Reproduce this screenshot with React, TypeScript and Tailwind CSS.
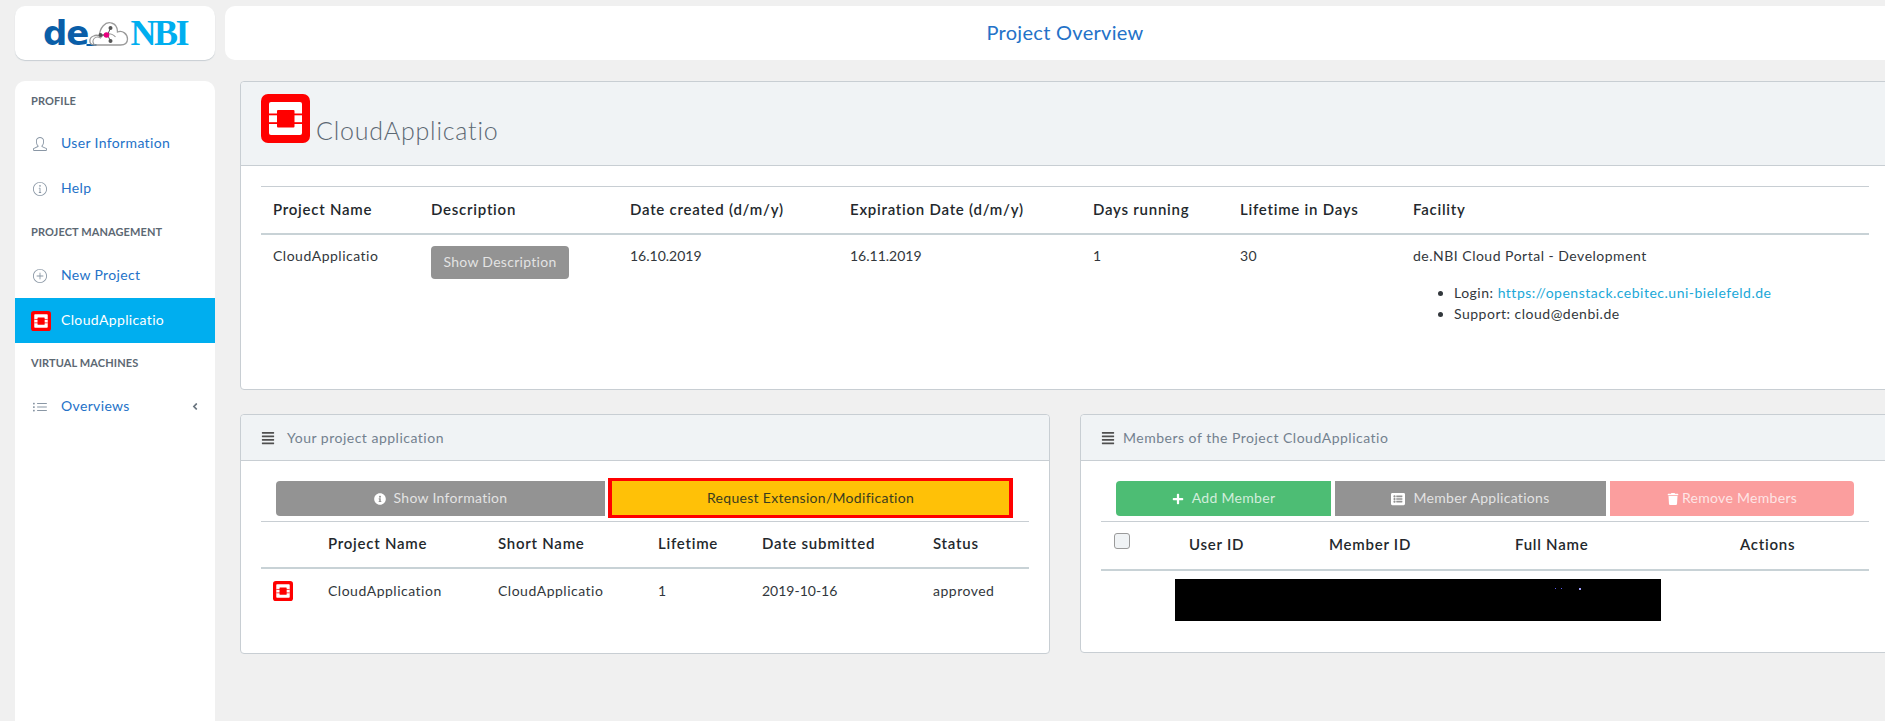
import React from 'react';
import { SlUser, SlInfo, SlPlus, SlList } from 'react-icons/sl';
import { FaAlignJustify, FaInfoCircle, FaPlus, FaListAlt, FaTrash, FaAngleLeft } from 'react-icons/fa';

const font = "font-['Lato','Open_Sans',sans-serif]";

function StackIcon({ className }: { className?: string }) {
    return (
        <svg viewBox="0 0 49 49" className={className}>
            <rect width="49" height="49" rx="7" fill="#ff0000" />
            <rect x="8" y="8" width="33" height="33" rx="2" fill="#ffffff" />
            <rect x="8" y="19.5" width="33" height="1.8" fill="#ff0000" />
            <rect x="8" y="28.2" width="33" height="1.8" fill="#ff0000" />
            <rect x="16" y="16" width="17.5" height="17.5" rx="1" fill="#ff0000" />
        </svg>
    );
}

function Logo() {
    return (
        <div className="flex h-[54px] w-[200px] shrink-0 items-center justify-center rounded-[10px] bg-white shadow-[0_1px_1px_#c8ced3]">
            <div className="flex items-center">
                <span className="font-['DejaVu_Sans',sans-serif] text-[34px] leading-none font-bold tracking-[-1px] text-[#0a5ea8]">de</span>
                <svg viewBox="0 0 42 28" className="-ml-[3px] h-[28px] w-[45px]">
                    <path d="M0 26 L10 26" fill="none" stroke="#0a5ea8" strokeWidth="2" />
                    <path d="M8 26 C2 26 2 19 7 17 C9 16 11 16 13 17 C13 9 19 2 25 4 C29 5 31 9 31 13 C36 11 41 15 41 20 C41 24 38 26 34 26 Z" fill="none" stroke="#9a9a9a" strokeWidth="1.3" />
                    <path d="M8 26 C4 21 9 16 14 19 C17 14 25 13 29 18" fill="none" stroke="#9a9a9a" strokeWidth="1.1" />
                    <path d="M13 16 L21 16 L24 9 M21 16 L24 22" stroke="#555555" strokeWidth="1" fill="none" />
                    <circle cx="24" cy="9" r="2" fill="#555555" />
                    <circle cx="14" cy="16" r="2" fill="#555555" />
                    <circle cx="24" cy="22" r="2" fill="#555555" />
                    <circle cx="20" cy="16" r="2.8" fill="#e6007e" />
                </svg>
                <span className="font-['Liberation_Serif',serif] text-[36px] leading-none font-bold tracking-[-2.5px] text-[#00aeef]">NBI</span>
            </div>
        </div>
    );
}

function NavTitle({ children, h }: { children: React.ReactNode; h: string }) {
    return (
        <div className={`flex items-center px-4 text-[11px] font-bold tracking-[0.1px] text-[#5c6873] ${h}`}>
            {children}
        </div>
    );
}

function NavItem({ icon, label, active, end }: { icon: React.ReactNode; label: string; active?: boolean; end?: React.ReactNode }) {
    return (
        <a className={`flex h-[45px] items-center pr-4 pl-4 text-[14px] tracking-[0.35px] ${active ? 'bg-[#00aeef] text-white' : 'text-[#2472c8]'}`}>
            <span className="flex w-[30px] shrink-0 items-center text-[#8a97a5]">{icon}</span>
            <span className="flex-1 pb-[2px]">{label}</span>
            {end}
        </a>
    );
}

function Sidebar() {
    return (
        <aside className="w-[200px] shrink-0 self-stretch rounded-t-[10px] bg-white">
            <NavTitle h="h-[40px]">PROFILE</NavTitle>
            <NavItem icon={<SlUser className="ml-[2px] h-[14px] w-[14px]" />} label="User Information" />
            <NavItem icon={<SlInfo className="ml-[2px] h-[14px] w-[14px]" />} label="Help" />
            <NavTitle h="h-[42px]">PROJECT MANAGEMENT</NavTitle>
            <NavItem icon={<SlPlus className="ml-[2px] h-[14px] w-[14px]" />} label="New Project" />
            <NavItem icon={<StackIcon className="h-5 w-5" />} label="CloudApplicatio" active />
            <NavTitle h="h-[41px]">VIRTUAL MACHINES</NavTitle>
            <NavItem
                icon={<SlList className="ml-[2px] h-[14px] w-[14px]" />}
                label="Overviews"
                end={<FaAngleLeft className="h-[11px] w-[8px] text-[#6b7680]" />}
            />
        </aside>
    );
}

function Card({ className, header, bodyClass, children }: { className?: string; header: React.ReactNode; bodyClass?: string; children: React.ReactNode }) {
    return (
        <section className={`rounded-[4px] border border-[#c8ced3] bg-white ${className ?? ''}`}>
            {header}
            <div className={bodyClass}>{children}</div>
        </section>
    );
}

function SmallHeader({ title, gap }: { title: string; gap: string }) {
    return (
        <div className="flex h-[46px] items-center rounded-t-[4px] border-b border-[#c8ced3] bg-[#f0f3f5] pl-5 text-[14px] text-[#73818f]">
            <FaAlignJustify className={`h-[14px] w-[14px] text-[#4f4f4f] ${gap}`} />
            <span className="pb-[1px] tracking-[0.5px]">{title}</span>
        </div>
    );
}

const th = 'border-t border-b-2 border-t-[#c8ced3] border-b-[#c8d2d6] px-3 pb-[2px] text-left align-middle text-[15px] font-semibold text-[#23282c] tracking-[0.75px]';

function ProjectTable() {
    const headers = [
        ['Project Name', 'w-[158px]'],
        ['Description', 'w-[199px]'],
        ['Date created (d/m/y)', 'w-[220px]'],
        ['Expiration Date (d/m/y)', 'w-[243px]'],
        ['Days running', 'w-[147px]'],
        ['Lifetime in Days', 'w-[173px]'],
        ['Facility', ''],
    ];
    return (
        <table className="w-[1608px] table-fixed border-collapse text-[14px] text-[#32373c]">
            <thead>
                <tr className="h-[47px]">
                    {headers.map(([h, w]) => (
                        <th key={h} className={`${th} ${w}`}>{h}</th>
                    ))}
                </tr>
            </thead>
            <tbody className="tracking-[0.5px]">
                <tr className="align-top">
                    <td className="px-3 pt-[10px]">CloudApplicatio</td>
                    <td className="px-3 pt-[11px]">
                        <button className="h-[33px] w-[138px] rounded-[4px] bg-[#939393] pb-[2px] text-[14px] tracking-[0.3px] text-white/75">Show Description</button>
                    </td>
                    <td className="px-3 pt-[10px] tracking-normal">16.10.2019</td>
                    <td className="px-3 pt-[10px] tracking-normal">16.11.2019</td>
                    <td className="px-3 pt-[10px]">1</td>
                    <td className="px-3 pt-[10px]">30</td>
                    <td className="px-3 pt-[10px]">
                        <div>de.NBI Cloud Portal - Development</div>
                        <ul className="mt-[16px] list-disc pl-[41px] leading-[21px]">
                            <li>Login: <a className="text-[#20a8d8]">https://openstack.cebitec.uni-bielefeld.de</a></li>
                            <li>Support: cloud@denbi.de</li>
                        </ul>
                    </td>
                </tr>
            </tbody>
        </table>
    );
}

function ApplicationCard() {
    const headers = [
        ['', 'w-[55px]'],
        ['Project Name', 'w-[170px]'],
        ['Short Name', 'w-[160px]'],
        ['Lifetime', 'w-[104px]'],
        ['Date submitted', 'w-[171px]'],
        ['Status', ''],
    ];
    return (
        <Card
            className="h-[240px] w-[810px] shrink-0"
            header={<SmallHeader title="Your project application" gap="mr-[12px]" />}
            bodyClass="px-5 pt-[20px]"
        >
            <div className="flex h-[35px] pl-[15px] text-[14px]">
                <button className="flex h-[35px] w-[329px] items-center justify-center gap-2 rounded-l-[4px] bg-[#939393] pb-[2px] tracking-[0.3px] text-white/75">
                    <FaInfoCircle className="mt-[2px] h-[12px] w-[12px] text-white" />
                    Show Information
                </button>
                <button className="-mt-[3px] ml-[3px] h-[40px] w-[405px] shrink-0 border-x-4 border-y-3 border-[#ff0000] bg-[#ffc107] pb-[2px] tracking-[0.3px] text-[#3b3d1f]">
                    Request Extension/Modification
                </button>
            </div>
            <table className="mt-[5px] w-[768px] table-fixed border-collapse text-[14px] text-[#32373c]">
                <thead>
                    <tr className="h-[46px]">
                        {headers.map(([h, w]) => (
                            <th key={h || 'icon'} className={`${th} ${w}`}>{h}</th>
                        ))}
                    </tr>
                </thead>
                <tbody className="tracking-[0.5px]">
                    <tr className="h-[45px]">
                        <td className="pl-3"><StackIcon className="h-5 w-5" /></td>
                        <td className="px-3">CloudApplication</td>
                        <td className="px-3">CloudApplicatio</td>
                        <td className="px-3">1</td>
                        <td className="px-3 tracking-normal">2019-10-16</td>
                        <td className="px-3">approved</td>
                    </tr>
                </tbody>
            </table>
        </Card>
    );
}

function MembersCard() {
    const headers = [
        ['User ID', 'w-[140px]'],
        ['Member ID', 'w-[186px]'],
        ['Full Name', 'w-[225px]'],
        ['Actions', ''],
    ];
    return (
        <Card
            className="h-[239px] w-[811px] shrink-0"
            header={<SmallHeader title="Members of the Project CloudApplicatio" gap="mr-[8px]" />}
            bodyClass="px-5 pt-[20px]"
        >
            <div className="flex h-[35px] gap-[4px] pl-[15px] text-[14px] tracking-[0.3px] text-white/75">
                <button className="flex w-[215px] items-center justify-center gap-2 rounded-l-[4px] bg-[#4dbd74] pb-[2px]">
                    <FaPlus className="mt-[2px] h-[12px] w-[12px] text-white" />
                    Add Member
                </button>
                <button className="flex w-[271px] items-center justify-center gap-2 bg-[#939393] pb-[2px]">
                    <FaListAlt className="mt-[2px] h-[14px] w-[14px] text-white" />
                    Member Applications
                </button>
                <button className="flex w-[244px] items-center justify-center gap-[3px] rounded-r-[4px] bg-[#fb9e9e] pb-[2px]">
                    <FaTrash className="mt-[2px] h-[12px] w-[12px] text-white" />
                    Remove Members
                </button>
            </div>
            <table className="mt-[5px] w-[768px] table-fixed border-collapse text-[14px] text-[#23282c]">
                <thead>
                    <tr className="h-[48px]">
                        <th className={`${th} w-[76px]`}>
                            <input type="checkbox" className="ml-[1px] block h-4 w-4 -translate-y-[3px] appearance-none rounded-[3px] border border-[#9a9a9a] bg-[#f0f3f5]" />
                        </th>
                        {headers.map(([h, w]) => (
                            <th key={h} className={`${th} ${w}`}>{h}</th>
                        ))}
                    </tr>
                </thead>
            </table>
            <div className="relative mt-[8px] ml-[74px] h-[42px] w-[486px] bg-black">
                <span className="absolute top-[9px] left-[380px] h-[1px] w-[1px] bg-[#5a5af0]" />
                <span className="absolute top-[9px] left-[386px] h-[1px] w-[1px] bg-[#5a5af0]" />
                <span className="absolute top-[9px] left-[404px] h-[2px] w-[2px] bg-[#a0a0ff]" />
            </div>
        </Card>
    );
}

export default function App() {
    return (
        <div className={`flex h-screen w-screen flex-col gap-[21px] overflow-hidden bg-[#f0f0f0] pt-[6px] pl-[15px] ${font}`}>
            <div className="flex gap-[10px]">
                <Logo />
                <header className="flex h-[54px] w-[1680px] shrink-0 items-center justify-center rounded-l-[10px] bg-white pb-[2px] text-[20px] tracking-[0.3px] text-[#2472c8]">
                    Project Overview
                </header>
            </div>
            <div className="flex min-h-0 flex-1 gap-[25px]">
                <Sidebar />
                <main className="flex w-[1650px] shrink-0 flex-col gap-[24px]">
                    <Card
                        className="h-[309px]"
                        header={
                            <div className="flex h-[84px] items-end rounded-t-[4px] border-b border-[#c8ced3] bg-[#f0f3f5] pb-[22px] pl-5">
                                <StackIcon className="mr-[6px] h-[49px] w-[49px]" />
                                <span className="-mb-[2px] text-[25px] leading-[30px] font-light tracking-[0.8px] text-[#5c6873]">CloudApplicatio</span>
                            </div>
                        }
                        bodyClass="px-5 pt-[20px]"
                    >
                        <ProjectTable />
                    </Card>
                    <div className="flex gap-[30px]">
                        <ApplicationCard />
                        <MembersCard />
                    </div>
                </main>
            </div>
        </div>
    );
}
